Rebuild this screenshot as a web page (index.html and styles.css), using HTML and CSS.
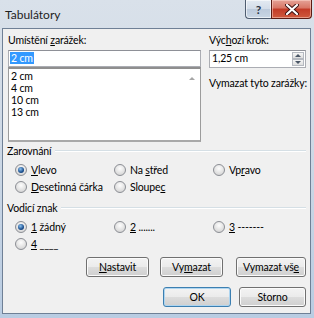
FILE: index.html
```html
<!DOCTYPE html>
<html lang="cs">
<head>
  <meta charset="UTF-8">
  <title>Tabulátory</title>
  <link rel="stylesheet" href="styles.css">
</head>
<body>
  <div class="window">
    <div class="titlebar">
      <span class="title">Tabulátory</span>
      <div class="caption">
        <div class="cap-btn help">?</div>
        <div class="cap-btn close">
          <svg width="14" height="11" viewBox="0 0 14 11"><path d="M2 1 L12 10 M12 1 L2 10" stroke="#3a1010" stroke-width="4" stroke-linecap="round"/><path d="M2 1 L12 10 M12 1 L2 10" stroke="#fff" stroke-width="2.2" stroke-linecap="round"/></svg>
        </div>
      </div>
    </div>

    <div class="client">
      <div class="top">
        <div class="col-left">
          <div class="label">Umístění <u>z</u>arážek:</div>
          <div class="textbox"><span class="sel">2 cm</span></div>
          <div class="listbox">
            <div class="item">2 cm</div>
            <div class="item">4 cm</div>
            <div class="item">10 cm</div>
            <div class="item">13 cm</div>
            <span class="list-arrow"></span>
          </div>
        </div>
        <div class="col-right">
          <div class="label">Výc<u>h</u>ozí krok:</div>
          <div class="spin">
            <span class="spin-text">1,25 cm</span>
            <div class="spin-btns">
              <div class="spin-btn"><span class="tri-up"></span></div>
              <div class="spin-btn"><span class="tri-down"></span></div>
            </div>
          </div>
          <div class="label clear-label">Vymazat tyto zarážky:</div>
        </div>
      </div>

      <div class="group">
        <div class="legend"><span>Zarovnání</span><span class="rule"></span></div>
        <div class="radios">
          <label class="radio"><span class="dot checked"></span><span><u>V</u>levo</span></label>
          <label class="radio"><span class="dot"></span><span>Na <u>s</u>třed</span></label>
          <label class="radio"><span class="dot"></span><span>Vp<u>r</u>avo</span></label>
          <label class="radio"><span class="dot"></span><span><u>D</u>esetinná čárka</span></label>
          <label class="radio"><span class="dot"></span><span>Sloupe<u>c</u></span></label>
        </div>
      </div>

      <div class="group group-leader">
        <div class="legend"><span>Vodicí znak</span><span class="rule"></span></div>
        <div class="radios">
          <label class="radio"><span class="dot checked"></span><span><u>1</u> žádný</span></label>
          <label class="radio"><span class="dot"></span><span><u>2</u> .......</span></label>
          <label class="radio"><span class="dot"></span><span><u>3</u> -------</span></label>
          <label class="radio"><span class="dot"></span><span><u>4</u> ____</span></label>
        </div>
      </div>

      <div class="btn-row row-actions">
        <button class="btn btn-set"><u>N</u>astavit</button>
        <button class="btn btn-clear">Vy<u>m</u>azat</button>
        <button class="btn btn-clear-all">Vymazat vš<u>e</u></button>
      </div>
      <div class="btn-row row-dialog">
        <button class="btn btn-ok default">OK</button>
        <button class="btn btn-cancel">Storno</button>
      </div>
    </div>
  </div>
</body>
</html>
```

FILE: styles.css
```css
* {
  box-sizing: border-box;
}
body {
  margin: 0;
  font-family: Lato, "Open Sans", sans-serif;
  font-size: 10.5px;
  letter-spacing: -0.15px;
  color: #000;
  background: #3b4a5e;
}
u {
  text-decoration-thickness: 1px;
  text-underline-offset: 1px;
}

/* window frame */
.window {
  width: 314px;
  height: 318px;
  display: flex;
  flex-direction: column;
  padding: 0 3px 4px 2px;
  background: linear-gradient(#d9e1ea, #d0dae6 40%, #b9cce2);
}
.titlebar {
  height: 28px;
  display: flex;
  justify-content: space-between;
  align-items: flex-start;
}
.title {
  padding: 7px 0 0 3px;
  font-size: 12px;
  letter-spacing: 0;
  color: #1e1e1e;
}
.caption {
  display: flex;
  margin-right: -1px;
}
.cap-btn {
  height: 19px;
  display: flex;
  align-items: center;
  justify-content: center;
  border: 1px solid #4f5d70;
  border-top: none;
}
.help {
  width: 26px;
  border-right: none;
  border-radius: 0 0 0 4px;
  background: linear-gradient(#e3eaf2, #d3dde9 50%, #bccadb 50%, #c9d6e4);
  color: #2b3546;
  font-size: 12px;
  font-weight: 700;
  box-shadow: inset 0 0 0 1px rgba(255,255,255,0.6);
}
.close {
  width: 41px;
  border-radius: 0 0 4px 0;
  background: linear-gradient(#e5a397, #d87564 45%, #c23a26 50%, #cf5a3e);
  border-color: #5c1c14;
  box-shadow: inset 0 0 0 1px rgba(255,220,210,0.5);
}

/* client area */
.client {
  flex: 1;
  background: #f0f0f0;
  border: 1px solid #6f8096;
  padding: 4px 4px 0 5px;
}
.top {
  display: flex;
  gap: 8px;
}
.col-left {
  width: 193px;
}
.col-right {
  width: 97px;
}
.label {
  height: 14px;
  line-height: 14px;
  margin-bottom: 3px;
  white-space: nowrap;
}
.textbox {
  height: 17px;
  border: 1px solid #abadb3;
  border-top-color: #8e9097;
  background: #fff;
  padding: 1px 0 0 1px;
  line-height: 13px;
}
.sel {
  background: #3399ff;
  color: #fff;
  padding: 0 1px;
}
.listbox {
  position: relative;
  height: 75px;
  border: 1px solid #9c9c9c;
  border-top: 2px solid #8f8f8f;
  border-bottom: 2px solid #a9a9a9;
  background: #fff;
  padding: 1px 0 0 2px;
}
.item {
  height: 12px;
  line-height: 12px;
}
.list-arrow {
  position: absolute;
  top: 8px;
  right: 5px;
  border-left: 3px solid transparent;
  border-right: 3px solid transparent;
  border-bottom: 3px solid #a6a6a6;
}
.spin {
  height: 18px;
  display: flex;
  border: 1px solid #abadb3;
  border-top-color: #8e9097;
  background: #fff;
}
.spin-text {
  flex: 1;
  padding-left: 2px;
  line-height: 15px;
}
.spin-btns {
  width: 13px;
  display: flex;
  flex-direction: column;
  padding: 1px 1px 1px 0;
}
.spin-btn {
  flex: 1;
  display: flex;
  align-items: center;
  justify-content: center;
  border: 1px solid #b5b9c0;
  background: linear-gradient(#f5f5f5, #dedede);
}
.tri-up {
  border-left: 3px solid transparent;
  border-right: 3px solid transparent;
  border-bottom: 3px solid #4a5666;
}
.tri-down {
  border-left: 3px solid transparent;
  border-right: 3px solid transparent;
  border-top: 3px solid #4a5666;
}
.clear-label {
  margin-top: 8px;
}

/* groups */
.group {
  margin-top: 2px;
}
.group-leader {
  margin-top: 6px;
}
.legend {
  height: 14px;
  line-height: 14px;
  display: flex;
  align-items: center;
  gap: 4px;
  margin-left: -1px;
}
.rule {
  flex: 1;
  border-top: 1px solid #d5dfe5;
  border-bottom: 1px solid #fff;
}
.radios {
  display: grid;
  grid-template-columns: 99px 99px 99px;
  grid-auto-rows: 17px;
  padding-left: 7px;
  margin-top: 3px;
}
.radio {
  display: flex;
  align-items: center;
  gap: 4px;
  white-space: nowrap;
}
.dot {
  width: 12px;
  height: 12px;
  border-radius: 50%;
  border: 1px solid #8b8e94;
  background: radial-gradient(circle at 50% 35%, #fdfdfd, #d6d6d6 80%);
  display: flex;
  align-items: center;
  justify-content: center;
}
.dot.checked::after {
  content: "";
  width: 6px;
  height: 6px;
  border-radius: 50%;
  background: radial-gradient(circle at 40% 35%, #8cc2f0, #1b4f8e 60%, #0c2a55);
}

/* buttons */
.btn-row {
  display: flex;
  justify-content: flex-end;
}
.row-actions {
  margin-top: 5px;
}
.row-dialog {
  margin-top: 10px;
  gap: 8px;
}
.btn {
  height: 20px;
  padding: 0;
  font-family: inherit;
  font-size: 10.5px;
  letter-spacing: -0.15px;
  color: #000;
  border: 1px solid #707070;
  border-radius: 3px;
  background: linear-gradient(#f3f3f3, #ebebeb 50%, #dddddd 50%, #cfcfcf);
  box-shadow: inset 0 0 0 1px #fbfbfb;
}
.btn-set {
  width: 63px;
}
.btn-clear {
  width: 63px;
  margin-left: 11px;
}
.btn-clear-all {
  width: 70px;
  margin-left: 13px;
}
.btn-ok {
  width: 68px;
}
.btn-cancel {
  width: 67px;
}
.btn.default {
  border-color: #3c7fb1;
  box-shadow: inset 0 0 0 1px #aed5f0;
}
```
